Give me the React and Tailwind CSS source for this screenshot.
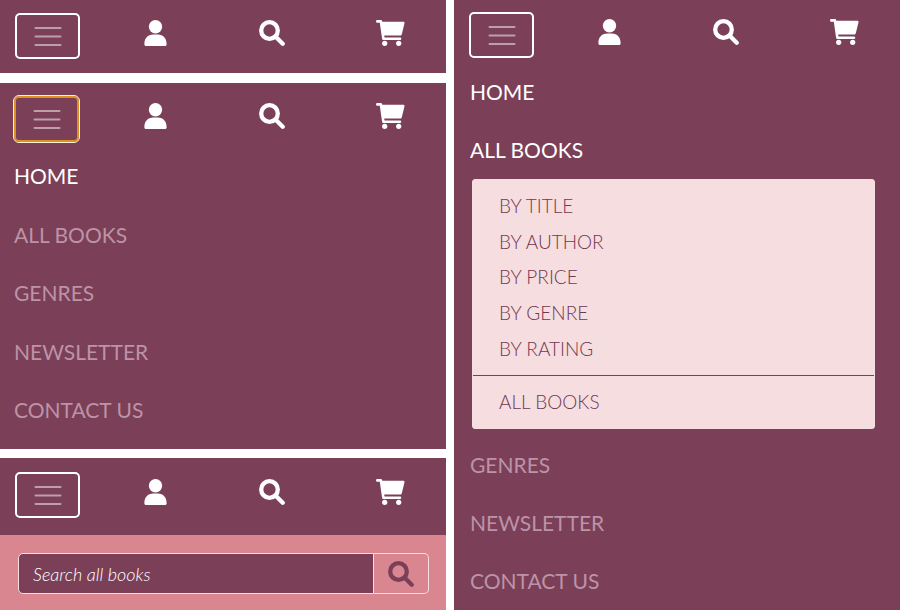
const sortLinks = ["BY TITLE", "BY AUTHOR", "BY PRICE", "BY GENRE", "BY RATING"];

function UserIcon() {
  return (
    <svg width="23" height="26" viewBox="0 0 23 26" fill="currentColor" aria-hidden="true">
      <circle cx="11.5" cy="6.7" r="6.7" />
      <path d="M9 14.6h5c5.200 0 8.600 4 8.600 9.300v.5c0 .9-.6 1.500-1.500 1.500H1.900c-.9 0-1.500-.6-1.500-1.500v-.5c0-5.300 3.400-9.300 8.600-9.300z" />
    </svg>
  );
}

function SearchIcon() {
  return (
    <svg
      width="26"
      height="26"
      viewBox="0 0 26 26"
      fill="none"
      stroke="currentColor"
      strokeWidth="4.3"
      aria-hidden="true"
    >
      <circle cx="10.5" cy="10.5" r="8.3" />
      <path d="M16.5 16.5l7.2 7.2" strokeLinecap="round" />
    </svg>
  );
}

function CartIcon() {
  return (
    <svg width="29" height="26" viewBox="0 0 29 26" fill="currentColor" aria-hidden="true">
      <path
        d="M1.3 1.4h3.600l2.500 17.300h16.600"
        fill="none"
        stroke="currentColor"
        strokeWidth="2.6"
        strokeLinecap="round"
        strokeLinejoin="round"
      />
      <path d="M5 1.800h22.300c.9 0 1.400.7 1.200 1.500l-2.700 11c-.2.8-.8 1.300-1.600 1.300H7z" />
      <circle cx="8.700" cy="23.300" r="2.600" />
      <circle cx="22.700" cy="23.300" r="2.600" />
    </svg>
  );
}

function Toggler({ focused }) {
  return (
    <button
      type="button"
      aria-label="Toggle navigation"
      className={
        focused
          ? "flex h-12 w-[67px] shrink-0 items-center justify-center rounded-md border border-[#fff3dc] shadow-[inset_0_0_0_2px_#dd921f]"
          : "flex h-[46px] w-[65px] shrink-0 items-center justify-center rounded-[5px] border-2 border-white"
      }
    >
      <svg width="28" height="20" viewBox="0 0 28 20" aria-hidden="true">
        <path
          d="M1.5 2h25M1.5 10.5h25M1.5 19h25"
          stroke="#bd9fac"
          strokeWidth="2"
          strokeLinecap="round"
        />
      </svg>
    </button>
  );
}

function TopBar({ focused }) {
  return (
    <div className={focused ? "flex items-start pl-[13px] pr-[41px]" : "flex items-start pl-[15px] pr-[41px]"}>
      <Toggler focused={focused} />
      <nav
        className={
          focused
            ? "mt-2 flex grow items-center justify-between pl-16 text-white"
            : "mt-[7px] flex grow items-center justify-between pl-16 text-white"
        }
      >
        <a href="#account" aria-label="Account">
          <UserIcon />
        </a>
        <a href="#search" aria-label="Search">
          <SearchIcon />
        </a>
        <a href="#cart" aria-label="Cart">
          <CartIcon />
        </a>
      </nav>
    </div>
  );
}

function MenuLink({ label, active }) {
  return (
    <a
      href="#menu"
      className={
        active
          ? "block py-[7px] text-[21px] leading-[33px] text-white"
          : "block py-[7px] text-[21px] leading-[33px] text-[#bd93a7]"
      }
    >
      {label}
    </a>
  );
}

function BooksDropdown() {
  return (
    <div className="mt-[6px] mr-[9px] ml-[2px] rounded-[3px] border border-[#f6dfe1] bg-[#f5dde0] py-2 text-[19px] font-light text-[#713850]">
      <ul className="grid h-[179px]">
        {sortLinks.map((label) => (
          <li key={label} className="flex items-center">
            <a href="#sort" className="block px-[26px]">
              {label}
            </a>
          </li>
        ))}
      </ul>
      <hr className="my-2 border-[#7b3f58]" />
      <a href="#all" className="block px-[26px] leading-9">
        ALL BOOKS
      </a>
    </div>
  );
}

function SearchForm() {
  return (
    <form className="flex bg-[#da8690] pt-[18px] pr-[17px] pb-4 pl-[18px]">
      <input
        type="search"
        aria-label="Search all books"
        placeholder="Search all books"
        className="h-[41px] min-w-0 grow rounded-l-[5px] border border-[#f5dde0] bg-[#7b3f58] px-[14px] text-[18px] font-light text-white italic placeholder:text-white"
      />
      <button
        type="button"
        aria-label="Search"
        className="flex h-[41px] w-[55px] items-center justify-center rounded-r-[5px] border border-l-0 border-[#f5dde0] text-[#7b3f58]"
      >
        <SearchIcon />
      </button>
    </form>
  );
}

export default function App() {
  return (
    <main className="grid min-h-screen grid-cols-2 gap-2 bg-white font-['Lato',sans-serif]">
      <div className="flex flex-col">
        <header className="bg-[#7b3f58] pt-[13px] pb-[14px]">
          <TopBar />
        </header>

        <section className="mt-[10px] flex grow flex-col bg-[#7b3f58] pt-3 pb-4">
          <TopBar focused />
          <ul className="mt-[9px] flex grow flex-col justify-between px-[14px]">
            <li><MenuLink label="HOME" active /></li>
            <li><MenuLink label="ALL BOOKS" /></li>
            <li><MenuLink label="GENRES" /></li>
            <li><MenuLink label="NEWSLETTER" /></li>
            <li><MenuLink label="CONTACT US" /></li>
          </ul>
        </section>

        <section className="mt-[9px] bg-[#7b3f58] pt-[14px]">
          <div className="pb-[17px]">
            <TopBar />
          </div>
          <SearchForm />
        </section>
      </div>

      <section className="flex flex-col bg-[#7b3f58] pt-3 pb-[6px]">
        <TopBar />
        <ul className="mt-[10px] flex grow flex-col justify-between px-4">
          <li><MenuLink label="HOME" active /></li>
          <li>
            <MenuLink label="ALL BOOKS" active />
            <BooksDropdown />
          </li>
          <li><MenuLink label="GENRES" /></li>
          <li><MenuLink label="NEWSLETTER" /></li>
          <li><MenuLink label="CONTACT US" /></li>
        </ul>
      </section>
    </main>
  );
}
